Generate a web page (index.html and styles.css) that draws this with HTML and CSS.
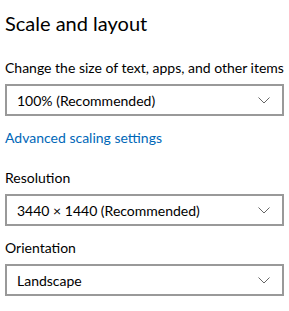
FILE: index.html
```html
<!DOCTYPE html>
<html lang="en">
<head>
  <meta charset="UTF-8" />
  <title>Scale and layout</title>
  <link rel="stylesheet" href="styles.css">
</head>
<body>
  <div class="panel">
    <h2>Scale and layout</h2>

    <div class="field first">
      <label>Change the size of text, apps, and other items</label>
      <div class="combo">
        <span>100% (Recommended)</span>
        <svg class="chev" width="12" height="7" viewBox="0 0 12 7"><path d="M0.5 0.5 L6 6 L11.5 0.5" fill="none" stroke="#666" stroke-width="1"/></svg>
      </div>
    </div>

    <a class="link" href="#">Advanced scaling settings</a>

    <div class="field res">
      <label>Resolution</label>
      <div class="combo">
        <span>3440 × 1440 (Recommended)</span>
        <svg class="chev" width="12" height="7" viewBox="0 0 12 7"><path d="M0.5 0.5 L6 6 L11.5 0.5" fill="none" stroke="#666" stroke-width="1"/></svg>
      </div>
    </div>

    <div class="field orient">
      <label>Orientation</label>
      <div class="combo">
        <span>Landscape</span>
        <svg class="chev" width="12" height="7" viewBox="0 0 12 7"><path d="M0.5 0.5 L6 6 L11.5 0.5" fill="none" stroke="#666" stroke-width="1"/></svg>
      </div>
    </div>
  </div>
</body>
</html>
```

FILE: styles.css
```css
body {
  margin: 0;
  background: #fff;
  font-family: "Lato", "Noto Sans", sans-serif;
  color: #000;
}

.panel {
  padding: 9px 5px 0 5px;
}

h2 {
  margin: 0;
  font-size: 20px;
  font-weight: 400;
  line-height: 28px;
}

.field label {
  display: block;
  font-size: 14px;
  line-height: 20px;
  white-space: nowrap;
}

.first { margin-top: 21px; }
.res { margin-top: 20px; }
.orient { margin-top: 12px; }

.combo {
  margin-top: 6px;
  width: 279px;
  height: 32px;
  box-sizing: border-box;
  border: 2px solid #999;
  display: flex;
  align-items: center;
  justify-content: space-between;
  padding: 0 12px 0 10px;
  font-size: 14px;
}

.chev { display: block; }

.link {
  display: block;
  margin-top: 12px;
  font-size: 14px;
  line-height: 20px;
  color: #0067b8;
  text-decoration: none;
}
```
